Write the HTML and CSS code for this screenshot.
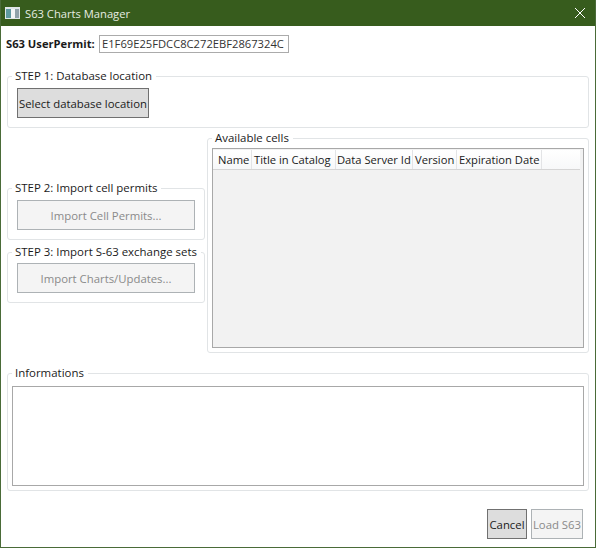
FILE: index.html
```html
<!DOCTYPE html>
<html lang="en">
<head>
  <meta charset="UTF-8">
  <title>S63 Charts Manager</title>
  <link rel="stylesheet" href="styles.css">
</head>

<body>
  <div class="window">
    <div class="titlebar">
      <svg class="app-icon" width="16" height="16" viewBox="0 0 16 16">
        <rect x="1" y="2" width="15" height="12" fill="#dfe6e8"/>
        <rect x="2" y="4" width="5" height="9" fill="#5f9aa0"/>
        <rect x="7" y="4" width="4" height="9" fill="#f2f5f5"/>
        <rect x="11" y="4" width="4" height="9" fill="#8fa2a9"/>
      </svg>
      <span class="title">S63 Charts Manager</span>
      <svg class="close" width="12" height="12" viewBox="0 0 12 12">
        <path d="M1 1 L11 11 M11 1 L1 11" stroke="#fff" stroke-width="1" fill="none"/>
      </svg>
    </div>

    <div class="content">
      <div class="permit">
        <label>S63 UserPermit:</label>
        <input type="text" class="permit-input" value="E1F69E25FDCC8C272EBF2867324C">
      </div>

      <fieldset class="group step1">
        <legend>STEP 1: Database location</legend>
        <button class="btn btn-select">Select database location</button>
      </fieldset>

      <div class="middle">
        <div class="steps">
          <fieldset class="group step2">
            <legend>STEP 2: Import cell permits</legend>
            <button class="btn btn-wide" disabled>Import Cell Permits...</button>
          </fieldset>
          <fieldset class="group step3">
            <legend>STEP 3: Import S-63 exchange sets</legend>
            <button class="btn btn-wide" disabled>Import Charts/Updates...</button>
          </fieldset>
        </div>

        <fieldset class="group cells">
          <legend>Available cells</legend>
          <div class="list">
            <div class="list-header">
              <span class="col col-name">Name</span>
              <span class="col col-title">Title in Catalog</span>
              <span class="col col-server">Data Server Id</span>
              <span class="col col-version">Version</span>
              <span class="col col-date">Expiration Date</span>
            </div>
          </div>
        </fieldset>
      </div>

      <fieldset class="group info">
        <legend>Informations</legend>
        <textarea class="info-box"></textarea>
      </fieldset>

      <div class="actions">
        <button class="btn btn-cancel">Cancel</button>
        <button class="btn btn-load" disabled>Load S63</button>
      </div>
    </div>
  </div>
</body>

</html>
```

FILE: styles.css
```css
* {
  box-sizing: border-box;
}

body {
  margin: 0;
  font-family: "Open Sans", "Noto Sans", sans-serif;
  font-size: 11.2px;
  color: #1a1a1a;
  background-color: #fff;
}

.window {
  width: 596px;
  height: 548px;
  display: flex;
  flex-direction: column;
  border: 1px solid #4a6b38;
  border-top: none;
  overflow: hidden;
}

/* Title bar */
.titlebar {
  height: 26px;
  flex: none;
  display: flex;
  align-items: center;
  padding-left: 3px;
  background-color: #375c1d;
  color: #e6ece2;
}

.app-icon {
  margin-right: 5px;
}

.title {
  flex: 1;
}

.close {
  margin-right: 9px;
}

.content {
  flex: 1;
  display: flex;
  flex-direction: column;
  padding: 9px 6px 8px 5px;
}

/* Permit row */
.permit {
  display: flex;
  align-items: center;
  height: 17px;
  gap: 3px;
}

.permit label {
  font-weight: bold;
  width: 90px;
  white-space: nowrap;
}

.permit-input {
  width: 190px;
  height: 18px;
  padding: 0 2px;
  border: 1px solid #ababab;
  font: inherit;
  color: #333;
}

/* Group boxes */
.group {
  margin: 0;
  min-width: 0;
  padding: 0 4px 4px 4px;
  border: 1px solid #e1e4e6;
  border-radius: 3px;
}

.group legend {
  padding: 0 4px 0 3px;
  font-size: 11.45px;
  line-height: 16px;
  white-space: nowrap;
}

.group .btn {
  margin-left: 5px;
  margin-top: 4px;
}

.step1 {
  margin-top: 16px;
  margin-left: 1px;
  height: 60px;
}

.middle {
  display: flex;
  margin-top: 2px;
  margin-left: 1px;
  gap: 2px;
  height: 223px;
}

.steps {
  width: 198px;
  display: flex;
  flex-direction: column;
  gap: 4px;
  padding-top: 50px;
}

.step2 {
  height: 60px;
}

.step3 {
  height: 59px;
}

.step3 .btn {
  margin-top: 3px;
}

.cells {
  flex: 1;
}

/* Buttons */
.btn {
  display: block;
  height: 30px;
  padding: 0;
  border: 1px solid #707070;
  background-color: #dddddd;
  font: inherit;
  font-size: 11.35px;
  color: #1a1a1a;
}

.btn:disabled {
  border-color: #adb2b5;
  background-color: #f4f4f4;
  color: #8a8a8a;
}

.btn-select {
  width: 132px;
}

.btn-wide {
  width: 178px;
}

/* Cell list */
.list {
  height: 200px;
  margin-top: 2px;
  border: 1px solid #a8a8a8;
  background-color: #f2f2f2;
  padding-top: 1px;
  padding-right: 3px;
}

.list-header {
  display: flex;
  height: 20px;
  align-items: center;
  background: linear-gradient(#fff, #f7f8f9);
  border-bottom: 1px solid #d5d5d5;
}

.col {
  height: 100%;
  display: flex;
  align-items: center;
  padding-left: 2px;
  border-right: 1px solid #e3e4e6;
  white-space: nowrap;
  overflow: hidden;
}

.col-name { width: 39px; padding-left: 5px; }
.col-title { width: 84px; }
.col-server { width: 77px; padding-left: 1px; }
.col-version { width: 44px; }
.col-date { width: 85px; }

/* Informations */
.info {
  margin-top: 12px;
  margin-left: 1px;
  height: 126px;
}

.info-box {
  display: block;
  width: 100%;
  height: 100px;
  margin-top: 5px;
  border: 1px solid #a8a8a8;
  outline: none;
  resize: none;
}

.actions {
  display: flex;
  justify-content: flex-end;
  gap: 4px;
  margin-top: 18px;
  padding-right: 6px;
}

.btn-cancel {
  width: 40px;
}

.btn-load {
  width: 52px;
}
```
